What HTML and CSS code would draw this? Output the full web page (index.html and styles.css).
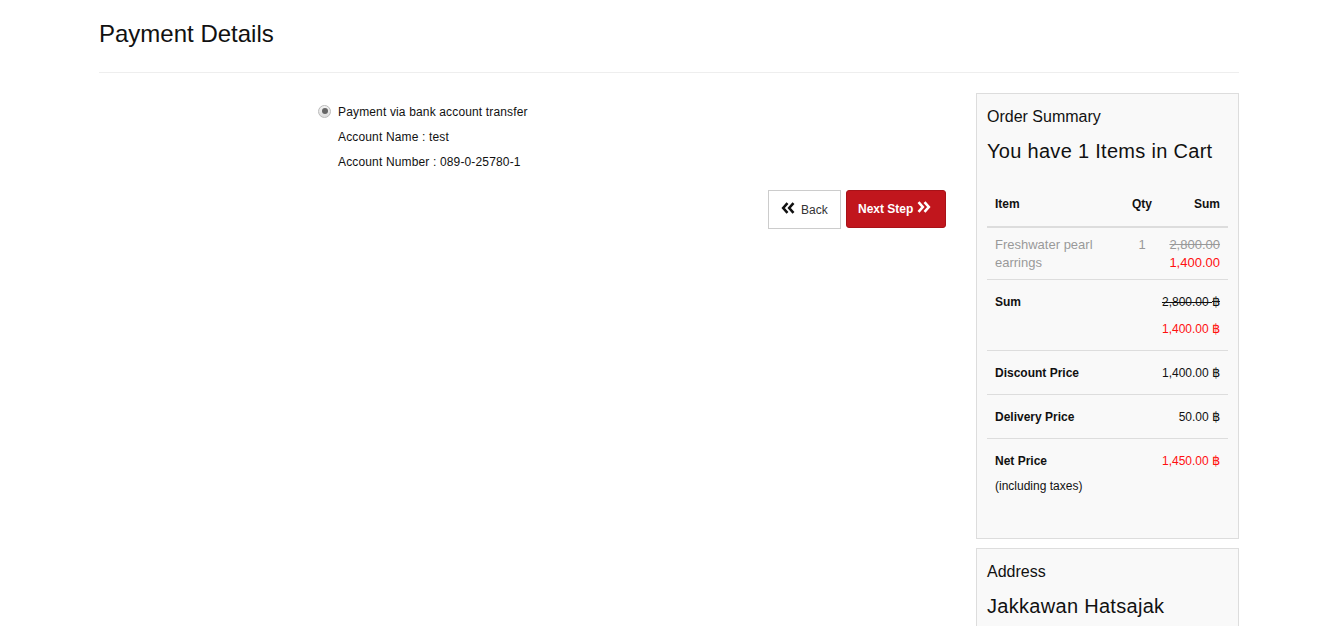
FILE: index.html
```html
<!DOCTYPE html>
<html>
<head>
<meta charset="utf-8">
<link rel="stylesheet" href="styles.css">
</head>
<body>
<div class="container">
  <h1 class="page-title">Payment Details</h1>
  <hr class="divider">
  <div class="row">
    <div class="main">
      <div class="payment">
        <label class="radio-line">
          <span class="radio"><span class="radio-dot"></span></span>
          <span>Payment via bank account transfer</span>
        </label>
        <p class="acc">Account Name : test</p>
        <p class="acc">Account Number : 089-0-25780-1</p>
      </div>
      <div class="actions">
        <button class="btn btn-back">
          <svg width="14" height="12" viewBox="0 0 14 12"><polyline points="6.5,1.2 2.2,6 6.5,10.8" fill="none" stroke="#111" stroke-width="2.6"/><polyline points="12.5,1.2 8.2,6 12.5,10.8" fill="none" stroke="#111" stroke-width="2.6"/></svg>
          Back
        </button>
        <button class="btn btn-next">
          Next Step
          <svg width="14" height="12" viewBox="0 0 14 12"><polyline points="1.5,1.2 5.8,6 1.5,10.8" fill="none" stroke="#fff" stroke-width="2.6"/><polyline points="7.5,1.2 11.8,6 7.5,10.8" fill="none" stroke="#fff" stroke-width="2.6"/></svg>
        </button>
      </div>
    </div>
    <aside class="side">
      <div class="panel summary">
        <div class="panel-label">Order Summary</div>
        <div class="panel-head">You have 1 Items in Cart</div>
        <div class="tbl">
          <div class="tr th">
            <span class="c-item">Item</span>
            <span class="c-qty">Qty</span>
            <span class="c-sum">Sum</span>
          </div>
          <div class="tr item-row">
            <span class="c-item">Freshwater pearl earrings</span>
            <span class="c-qty">1</span>
            <span class="c-sum"><s>2,800.00</s><br><span class="red">1,400.00</span></span>
          </div>
          <div class="tr total-row">
            <span class="lbl">Sum</span>
            <span class="val"><s>2,800.00 <span class="baht">฿</span></s><span class="red second">1,400.00 <span class="baht">฿</span></span></span>
          </div>
          <div class="tr total-row">
            <span class="lbl">Discount Price</span>
            <span class="val"><span>1,400.00 <span class="baht">฿</span></span></span>
          </div>
          <div class="tr total-row">
            <span class="lbl">Delivery Price</span>
            <span class="val"><span>50.00 <span class="baht">฿</span></span></span>
          </div>
          <div class="tr total-row last">
            <span class="lbl">Net Price<span class="note">(including taxes)</span></span>
            <span class="val red"><span>1,450.00 <span class="baht">฿</span></span></span>
          </div>
        </div>
      </div>
      <div class="panel address">
        <div class="panel-label">Address</div>
        <div class="panel-head">Jakkawan Hatsajak</div>
      </div>
    </aside>
  </div>
</div>
</body>
</html>
```
FILE: styles.css
```css
* { box-sizing: border-box; }
html, body { margin: 0; padding: 0; background: #fff; }
body {
  font-family: "Liberation Sans", Arial, sans-serif;
  color: #111;
  font-size: 12px;
  line-height: 18px;
}
.container {
  width: 1140px;
  margin-left: 99px;
}
.page-title {
  font-size: 24px;
  font-weight: normal;
  line-height: 30px;
  margin: 19px 0 0;
  color: #111;
}
.divider {
  border: 0;
  border-top: 1px solid #eee;
  margin: 23px 0 20px;
}
.row {
  display: flex;
  justify-content: space-between;
}
.main {
  width: 847px;
}
.payment {
  padding-left: 219px;
  padding-top: 10px;
  letter-spacing: 0.15px;
}
.radio-line {
  display: flex;
  align-items: center;
  gap: 7px;
  height: 18px;
}
.radio {
  width: 13px;
  height: 13px;
  border-radius: 50%;
  border: 1px solid #bbb;
  background: linear-gradient(#f4f4f4, #dcdcdc);
  display: flex;
  align-items: center;
  justify-content: center;
  margin-top: -2px;
}
.radio-dot {
  width: 6px;
  height: 6px;
  border-radius: 50%;
  background: #666;
}
.acc {
  margin: 7px 0 0 20px;
  line-height: 18px;
}
.actions {
  display: flex;
  justify-content: flex-end;
  gap: 5px;
  margin-top: 19px;
}
.btn {
  font-family: "Liberation Sans", Arial, sans-serif;
  font-size: 12px;
  height: 39px;
  display: flex;
  align-items: center;
  cursor: pointer;
}
.btn-back {
  width: 73px;
  background: #fff;
  border: 1px solid #ccc;
  border-radius: 0;
  color: #333;
  padding: 0 0 0 12px;
  gap: 6px;
}
.btn-back svg { margin-top: -3px; }
.btn-next {
  width: 100px;
  height: 38px;
  background: #c1161d;
  border: 1px solid #a81218;
  border-radius: 3px;
  color: #fff;
  font-weight: bold;
  padding: 0 0 0 11px;
  gap: 4px;
}
.btn-next svg { margin-top: -4px; }
.side {
  width: 263px;
}
.panel {
  background: #f9f9f9;
  border: 1px solid #ddd;
  padding: 11px 10px 0;
}
.panel-label {
  font-size: 16px;
  line-height: 24px;
}
.panel-head {
  font-size: 20px;
  line-height: 28px;
  margin-top: 8px;
  letter-spacing: 0.3px;
}
.summary { padding-bottom: 31px; }
.tbl { margin-top: 18px; }
.tr {
  display: flex;
  border-bottom: 1px solid #ddd;
  padding: 13px 8px 12px;
}
.th {
  font-weight: bold;
  border-bottom-width: 2px;
  padding: 12px 8px 13px;
}
.c-item { flex: 1; }
.c-qty { width: 34px; text-align: center; }
.c-sum { width: 61px; text-align: right; }
.item-row {
  font-size: 13px;
  color: #999;
  padding: 8px 8px 7px;
}
.red { color: #ff1010; }
.baht { font-size: 13px; }
.total-row .lbl {
  flex: 1;
  font-weight: bold;
  display: flex;
  flex-direction: column;
}
.total-row .val {
  text-align: right;
  display: flex;
  flex-direction: column;
  align-items: flex-end;
  white-space: nowrap;
}
.second { margin-top: 9px; }
.note {
  font-weight: normal;
  margin-top: 7px;
}
.last { border-bottom: 0; }
.address {
  margin-top: 9px;
  padding-bottom: 20px;
}
```
